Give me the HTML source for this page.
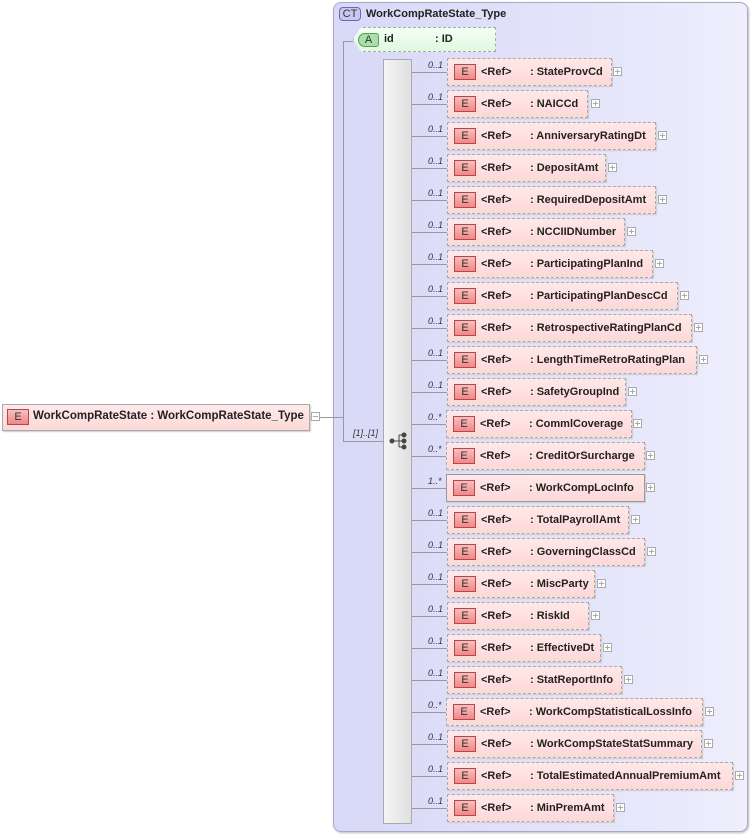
<!DOCTYPE html>
<html><head><meta charset="utf-8">
<style>
*{margin:0;padding:0;box-sizing:border-box}
body{width:753px;height:836px;background:#fff;position:relative;overflow:hidden;font-family:"Liberation Sans",Arial,sans-serif;font-size:11px;font-weight:bold;color:#222}
.a{position:absolute}
.ct{left:333px;top:2px;width:415px;height:830px;border:1px solid #a8a8c0;border-radius:8px;background:linear-gradient(90deg,#d8d8f8,#e4e4fb 60%,#eeeefc);box-shadow:1px 1px 2px #bbb}
.ctl{left:339px;top:7px;width:22px;height:14px;border:1px solid #6a6ab0;border-radius:4px;background:#c8c8f0;font-weight:normal;font-size:11px;text-align:center;line-height:12px;color:#333}
.el{position:absolute;left:447px;height:28px;border:1px dashed #aaa;background:linear-gradient(180deg,#ffe8e8,#fdd8d8);box-shadow:1px 1px 1px #ccc}
.el.s{border:1px solid #999}
.el .e{position:absolute;left:6px;top:5px;width:22px;height:16px;border:1px solid #b44;background:linear-gradient(180deg,#f4c0c0,#f08888);font-weight:normal;text-align:center;line-height:15px;color:#333}
.el .r{position:absolute;left:33px;top:6px;line-height:14px}
.el .n{position:absolute;left:82px;top:6px;line-height:14px;white-space:nowrap}
.pl{position:absolute;width:9px;height:9px;border:1px solid #aaa;background:#fff;transform:translateY(-1px)}
.pl:before{content:"";position:absolute;left:1px;top:3px;width:5px;height:1px;background:#aaa}
.pl:after{content:"";position:absolute;left:3px;top:1px;width:1px;height:5px;background:#aaa}
.m{position:absolute;left:428px;font-style:italic;font-weight:normal;font-size:9px;color:#333}
.hl{position:absolute;left:412px;width:35px;height:1px;background:#999;transform:translateY(-1px)}
</style></head><body>
<div class="a ct"></div>
<div class="a ctl">CT</div>
<div class="a" style="left:366px;top:7px;line-height:14px">WorkCompRateState_Type</div>

<div class="a" style="left:353px;top:27px;width:143px;height:25px;border:1px dashed #aaa;background:linear-gradient(180deg,#f4fff4,#e0f8e0);clip-path:polygon(8px 0,100% 0,100% 100%,8px 100%,0 50%)"></div>
<div class="a" style="left:358px;top:33px;width:21px;height:14px;border:1px solid #5a9a5a;border-radius:7px 3px 3px 7px;background:#a8e0a8;font-weight:normal;text-align:center;line-height:12px;color:#333">A</div>
<div class="a" style="left:384px;top:32px;line-height:14px">id</div>
<div class="a" style="left:435px;top:32px;line-height:14px">: ID</div>

<div class="a" style="left:343px;top:41px;width:1px;height:400px;background:#999"></div>
<div class="a" style="left:343px;top:41px;width:10px;height:1px;background:#999"></div>
<div class="a" style="left:310px;top:417px;width:33px;height:1px;background:#999"></div>
<div class="a" style="left:343px;top:441px;width:40px;height:1px;background:#999"></div>
<div class="a" style="left:353px;top:428px;font-style:italic;font-weight:normal;font-size:9px;color:#333">[1]..[1]</div>

<div class="a" style="left:2px;top:404px;width:308px;height:27px;border:1px solid #aaa;background:linear-gradient(180deg,#ffeaea,#fdd8d8);box-shadow:1px 1px 1px #ccc"></div>
<div class="a" style="left:7px;top:409px;width:22px;height:16px;border:1px solid #b44;background:linear-gradient(180deg,#f4c0c0,#f08888);font-weight:normal;text-align:center;line-height:15px;color:#333">E</div>
<div class="a" style="left:33px;top:409px;line-height:14px;font-size:11.5px">WorkCompRateState : WorkCompRateState_Type</div>
<div class="a" style="left:311px;top:412px;width:9px;height:9px;border:1px solid #aaa;background:#fff"><div style="position:absolute;left:1px;top:3px;width:5px;height:1px;background:#aaa"></div></div>

<div class="a" style="left:383px;top:59px;width:29px;height:765px;border:1px solid #aaa;background:linear-gradient(90deg,#f4f4f4,#e0e0e0)"></div>
<svg class="a" style="left:389px;top:432px" width="20" height="18" viewBox="0 0 20 18">
<g fill="#444" stroke="#444" stroke-width="1">
<circle cx="3" cy="9" r="2"/><line x1="3" y1="9" x2="10" y2="9"/><line x1="10" y1="3" x2="10" y2="15"/>
<line x1="10" y1="3" x2="15" y2="3"/><line x1="10" y1="9" x2="15" y2="9"/><line x1="10" y1="15" x2="15" y2="15"/>
<circle cx="15" cy="3" r="2"/><circle cx="15" cy="9" r="2"/><circle cx="15" cy="15" r="2"/></g></svg>

<div class="m" style="top:60px">0..1</div><div class="hl" style="top:73px"></div><div class="el" style="top:58px;width:165px"><div class="e">E</div><div class="r">&lt;Ref&gt;</div><div class="n">: StateProvCd</div></div><div class="pl" style="left:613px;top:68px"></div>
<div class="m" style="top:92px">0..1</div><div class="hl" style="top:105px"></div><div class="el" style="top:90px;width:141px"><div class="e">E</div><div class="r">&lt;Ref&gt;</div><div class="n">: NAICCd</div></div><div class="pl" style="left:591px;top:100px"></div>
<div class="m" style="top:124px">0..1</div><div class="hl" style="top:137px"></div><div class="el" style="top:122px;width:209px"><div class="e">E</div><div class="r">&lt;Ref&gt;</div><div class="n">: AnniversaryRatingDt</div></div><div class="pl" style="left:658px;top:132px"></div>
<div class="m" style="top:156px">0..1</div><div class="hl" style="top:169px"></div><div class="el" style="top:154px;width:159px"><div class="e">E</div><div class="r">&lt;Ref&gt;</div><div class="n">: DepositAmt</div></div><div class="pl" style="left:608px;top:164px"></div>
<div class="m" style="top:188px">0..1</div><div class="hl" style="top:201px"></div><div class="el" style="top:186px;width:209px"><div class="e">E</div><div class="r">&lt;Ref&gt;</div><div class="n">: RequiredDepositAmt</div></div><div class="pl" style="left:658px;top:196px"></div>
<div class="m" style="top:220px">0..1</div><div class="hl" style="top:233px"></div><div class="el" style="top:218px;width:178px"><div class="e">E</div><div class="r">&lt;Ref&gt;</div><div class="n">: NCCIIDNumber</div></div><div class="pl" style="left:627px;top:228px"></div>
<div class="m" style="top:252px">0..1</div><div class="hl" style="top:265px"></div><div class="el" style="top:250px;width:206px"><div class="e">E</div><div class="r">&lt;Ref&gt;</div><div class="n">: ParticipatingPlanInd</div></div><div class="pl" style="left:655px;top:260px"></div>
<div class="m" style="top:284px">0..1</div><div class="hl" style="top:297px"></div><div class="el" style="top:282px;width:231px"><div class="e">E</div><div class="r">&lt;Ref&gt;</div><div class="n">: ParticipatingPlanDescCd</div></div><div class="pl" style="left:680px;top:292px"></div>
<div class="m" style="top:316px">0..1</div><div class="hl" style="top:329px"></div><div class="el" style="top:314px;width:245px"><div class="e">E</div><div class="r">&lt;Ref&gt;</div><div class="n">: RetrospectiveRatingPlanCd</div></div><div class="pl" style="left:694px;top:324px"></div>
<div class="m" style="top:348px">0..1</div><div class="hl" style="top:361px"></div><div class="el" style="top:346px;width:250px"><div class="e">E</div><div class="r">&lt;Ref&gt;</div><div class="n">: LengthTimeRetroRatingPlan</div></div><div class="pl" style="left:699px;top:356px"></div>
<div class="m" style="top:380px">0..1</div><div class="hl" style="top:393px"></div><div class="el" style="top:378px;width:179px"><div class="e">E</div><div class="r">&lt;Ref&gt;</div><div class="n">: SafetyGroupInd</div></div><div class="pl" style="left:628px;top:388px"></div>
<div class="m" style="top:412px">0..*</div><div class="hl" style="top:425px"></div><div class="el" style="top:410px;width:186px;left:446px"><div class="e">E</div><div class="r">&lt;Ref&gt;</div><div class="n">: CommlCoverage</div></div><div class="pl" style="left:633px;top:420px"></div>
<div class="m" style="top:444px">0..*</div><div class="hl" style="top:457px"></div><div class="el" style="top:442px;width:199px;left:446px"><div class="e">E</div><div class="r">&lt;Ref&gt;</div><div class="n">: CreditOrSurcharge</div></div><div class="pl" style="left:646px;top:452px"></div>
<div class="m" style="top:476px">1..*</div><div class="hl" style="top:489px"></div><div class="el s" style="top:474px;width:199px;left:446px"><div class="e">E</div><div class="r">&lt;Ref&gt;</div><div class="n">: WorkCompLocInfo</div></div><div class="pl" style="left:646px;top:484px"></div>
<div class="m" style="top:508px">0..1</div><div class="hl" style="top:521px"></div><div class="el" style="top:506px;width:182px"><div class="e">E</div><div class="r">&lt;Ref&gt;</div><div class="n">: TotalPayrollAmt</div></div><div class="pl" style="left:631px;top:516px"></div>
<div class="m" style="top:540px">0..1</div><div class="hl" style="top:553px"></div><div class="el" style="top:538px;width:198px"><div class="e">E</div><div class="r">&lt;Ref&gt;</div><div class="n">: GoverningClassCd</div></div><div class="pl" style="left:647px;top:548px"></div>
<div class="m" style="top:572px">0..1</div><div class="hl" style="top:585px"></div><div class="el" style="top:570px;width:148px"><div class="e">E</div><div class="r">&lt;Ref&gt;</div><div class="n">: MiscParty</div></div><div class="pl" style="left:597px;top:580px"></div>
<div class="m" style="top:604px">0..1</div><div class="hl" style="top:617px"></div><div class="el" style="top:602px;width:142px"><div class="e">E</div><div class="r">&lt;Ref&gt;</div><div class="n">: RiskId</div></div><div class="pl" style="left:591px;top:612px"></div>
<div class="m" style="top:636px">0..1</div><div class="hl" style="top:649px"></div><div class="el" style="top:634px;width:154px"><div class="e">E</div><div class="r">&lt;Ref&gt;</div><div class="n">: EffectiveDt</div></div><div class="pl" style="left:603px;top:644px"></div>
<div class="m" style="top:668px">0..1</div><div class="hl" style="top:681px"></div><div class="el" style="top:666px;width:175px"><div class="e">E</div><div class="r">&lt;Ref&gt;</div><div class="n">: StatReportInfo</div></div><div class="pl" style="left:624px;top:676px"></div>
<div class="m" style="top:700px">0..*</div><div class="hl" style="top:713px"></div><div class="el" style="top:698px;width:257px;left:446px"><div class="e">E</div><div class="r">&lt;Ref&gt;</div><div class="n">: WorkCompStatisticalLossInfo</div></div><div class="pl" style="left:705px;top:708px"></div>
<div class="m" style="top:732px">0..1</div><div class="hl" style="top:745px"></div><div class="el" style="top:730px;width:255px"><div class="e">E</div><div class="r">&lt;Ref&gt;</div><div class="n">: WorkCompStateStatSummary</div></div><div class="pl" style="left:704px;top:740px"></div>
<div class="m" style="top:764px">0..1</div><div class="hl" style="top:777px"></div><div class="el" style="top:762px;width:286px"><div class="e">E</div><div class="r">&lt;Ref&gt;</div><div class="n">: TotalEstimatedAnnualPremiumAmt</div></div><div class="pl" style="left:735px;top:772px"></div>
<div class="m" style="top:796px">0..1</div><div class="hl" style="top:809px"></div><div class="el" style="top:794px;width:167px"><div class="e">E</div><div class="r">&lt;Ref&gt;</div><div class="n">: MinPremAmt</div></div><div class="pl" style="left:616px;top:804px"></div>
</body></html>
